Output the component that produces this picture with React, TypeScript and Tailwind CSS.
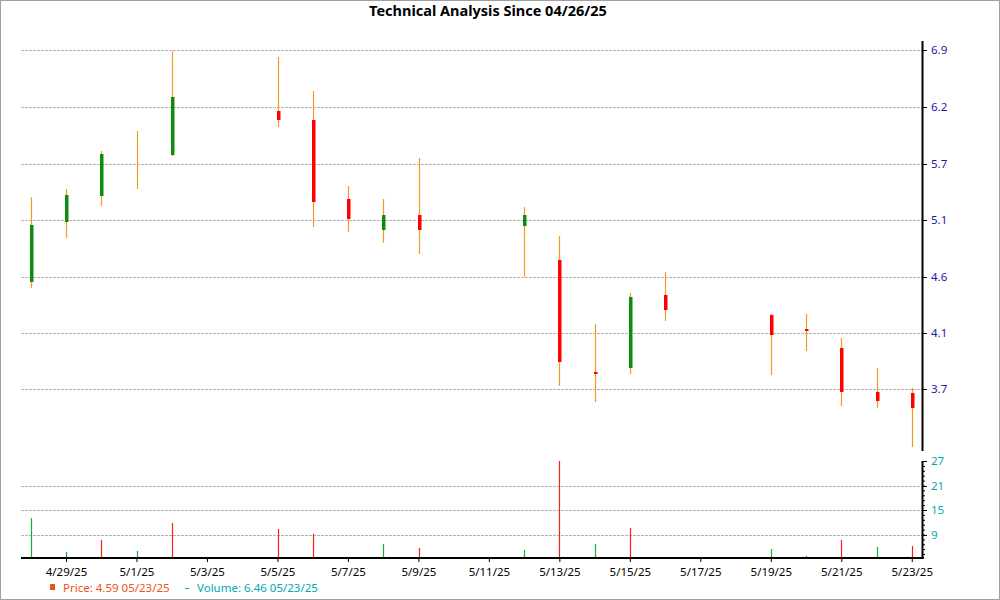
import React from "react";

type C = [number, number, number, number, number, string];
const candles: C[] = [
  [30,196,287,224,281,"g"],[65,188,237,194,221,"g"],[100,150,205,153,195,"g"],[136,130,188,159,160,"o"],
  [171,50,155,96,154,"g"],[277,56,126,110,119,"r"],[312,90,226,119,201,"r"],[347,185,231,198,218,"r"],
  [382,198,242,214,229,"g"],[418,157,253,214,229,"r"],[523,206,276,214,225,"g"],[558,235,385,259,361,"r"],
  [594,323,401,371,373,"r"],[629,292,373,296,367,"g"],[664,271,320,294,309,"r"],[770,313,374,314,334,"r"],
  [805,313,350,328,330,"r"],[840,337,405,347,391,"r"],[876,367,407,391,400,"r"],[911,387,446,392,407,"r"],
];
const vols: [number, number, string][] = [
  [30,517,"g"],[65,551,"g"],[100,539,"r"],[136,550,"g"],[171,522,"r"],[277,528,"r"],[312,533,"r"],
  [382,543,"g"],[418,547,"r"],[523,549,"g"],[558,460,"r"],[594,543,"g"],[629,527,"r"],[770,548,"g"],
  [805,555,"r"],[840,539,"r"],[876,546,"g"],[911,545,"r"],
];
const priceGrid: [number, string][] = [[49,"6.9"],[106,"6.2"],[163,"5.7"],[219,"5.1"],[276,"4.6"],[332,"4.1"],[388,"3.7"]];
const volGrid: [number, string][] = [[460,"27"],[485,"21"],[509,"15"],[534,"9"]];
const dates = ["4/29/25","5/1/25","5/3/25","5/5/25","5/7/25","5/9/25","5/11/25","5/13/25","5/15/25","5/17/25","5/19/25","5/21/25","5/23/25"];

export default function App() {
  return (
    <div className="w-[1000px] h-[600px] bg-white border border-[#a0a0a0] overflow-hidden font-['Liberation_Sans',Arial,sans-serif]">
      <svg width="998" height="598" className="block font-['Liberation_Sans',Arial,sans-serif]">
        <text x="487" y="15" textAnchor="middle" fontSize="14.5" fontWeight="bold" fill="#000">Technical Analysis Since 04/26/25</text>
        {priceGrid.map(([y, l]) => (
          <g key={l}>
            <line x1="20" x2="921" y1={y + 0.5} y2={y + 0.5} stroke="#b4b4b4" strokeDasharray="3 1" />
            <line x1="921" x2="926" y1={y + 0.5} y2={y + 0.5} stroke="#000" />
            <text x="930" y={y + 4} fontSize="11.5" fill="#1a1a9e">{l}</text>
          </g>
        ))}
        <line x1="921.5" x2="921.5" y1="40" y2="450" stroke="#000" strokeWidth="2" />
        {volGrid.map(([y, l]) => (
          <g key={l}>
            {y !== 460 && <line x1="20" x2="921" y1={y + 0.5} y2={y + 0.5} stroke="#b4b4b4" strokeDasharray="3 1" />}
            <line x1="921" x2="926" y1={y + 0.5} y2={y + 0.5} stroke="#000" />
            <text x="930" y={y + 4} fontSize="11.5" fill="#00a8b0">{l}</text>
          </g>
        ))}
        {Array.from({ length: 20 }).map((_, i) => (
          <line key={i} x1="921" x2="924" y1={460.5 + i * 4.9} y2={460.5 + i * 4.9} stroke="#000" />
        ))}
        <line x1="921.5" x2="921.5" y1="460" y2="558" stroke="#000" strokeWidth="2" />
        <line x1="20" x2="923" y1="557" y2="557" stroke="#000" strokeWidth="2" />
        {dates.map((d, i) => {
          const x = 65.5 + i * 70.48;
          return (
            <g key={d}>
              <line x1={x} x2={x} y1="557" y2="561" stroke="#000" />
              <text x={x} y="575" textAnchor="middle" fontSize="11.5" fill="#000">{d}</text>
            </g>
          );
        })}
        {vols.map(([x, y, c], i) => (
          <line key={i} x1={x + 0.5} x2={x + 0.5} y1={y} y2="556" stroke={c === "g" ? "#10b030" : "#ff2010"} strokeWidth="1.2" />
        ))}
        {candles.map(([x, wt, wb, bt, bb, c], i) => (
          <g key={i}>
            <line x1={x + 0.5} x2={x + 0.5} y1={wt} y2={wb} stroke="#f59a20" strokeWidth="1.2" />
            {c !== "o" && (
              <rect x={x - 1} y={bt} width="3.5" height={Math.max(bb - bt, 1.5)} fill={c === "g" ? "#108a10" : "#f00"} />
            )}
          </g>
        ))}
        <rect x="49" y="583" width="5" height="6" fill="#f05020" />
        <text x="62" y="591" fontSize="11.5" fill="#f05020">Price: 4.59  05/23/25</text>
        <line x1="184" x2="188" y1="587.5" y2="587.5" stroke="#00a8b0" />
        <text x="196" y="591" fontSize="11.5" fill="#00a8b0">Volume: 6.46  05/23/25</text>
      </svg>
    </div>
  );
}
